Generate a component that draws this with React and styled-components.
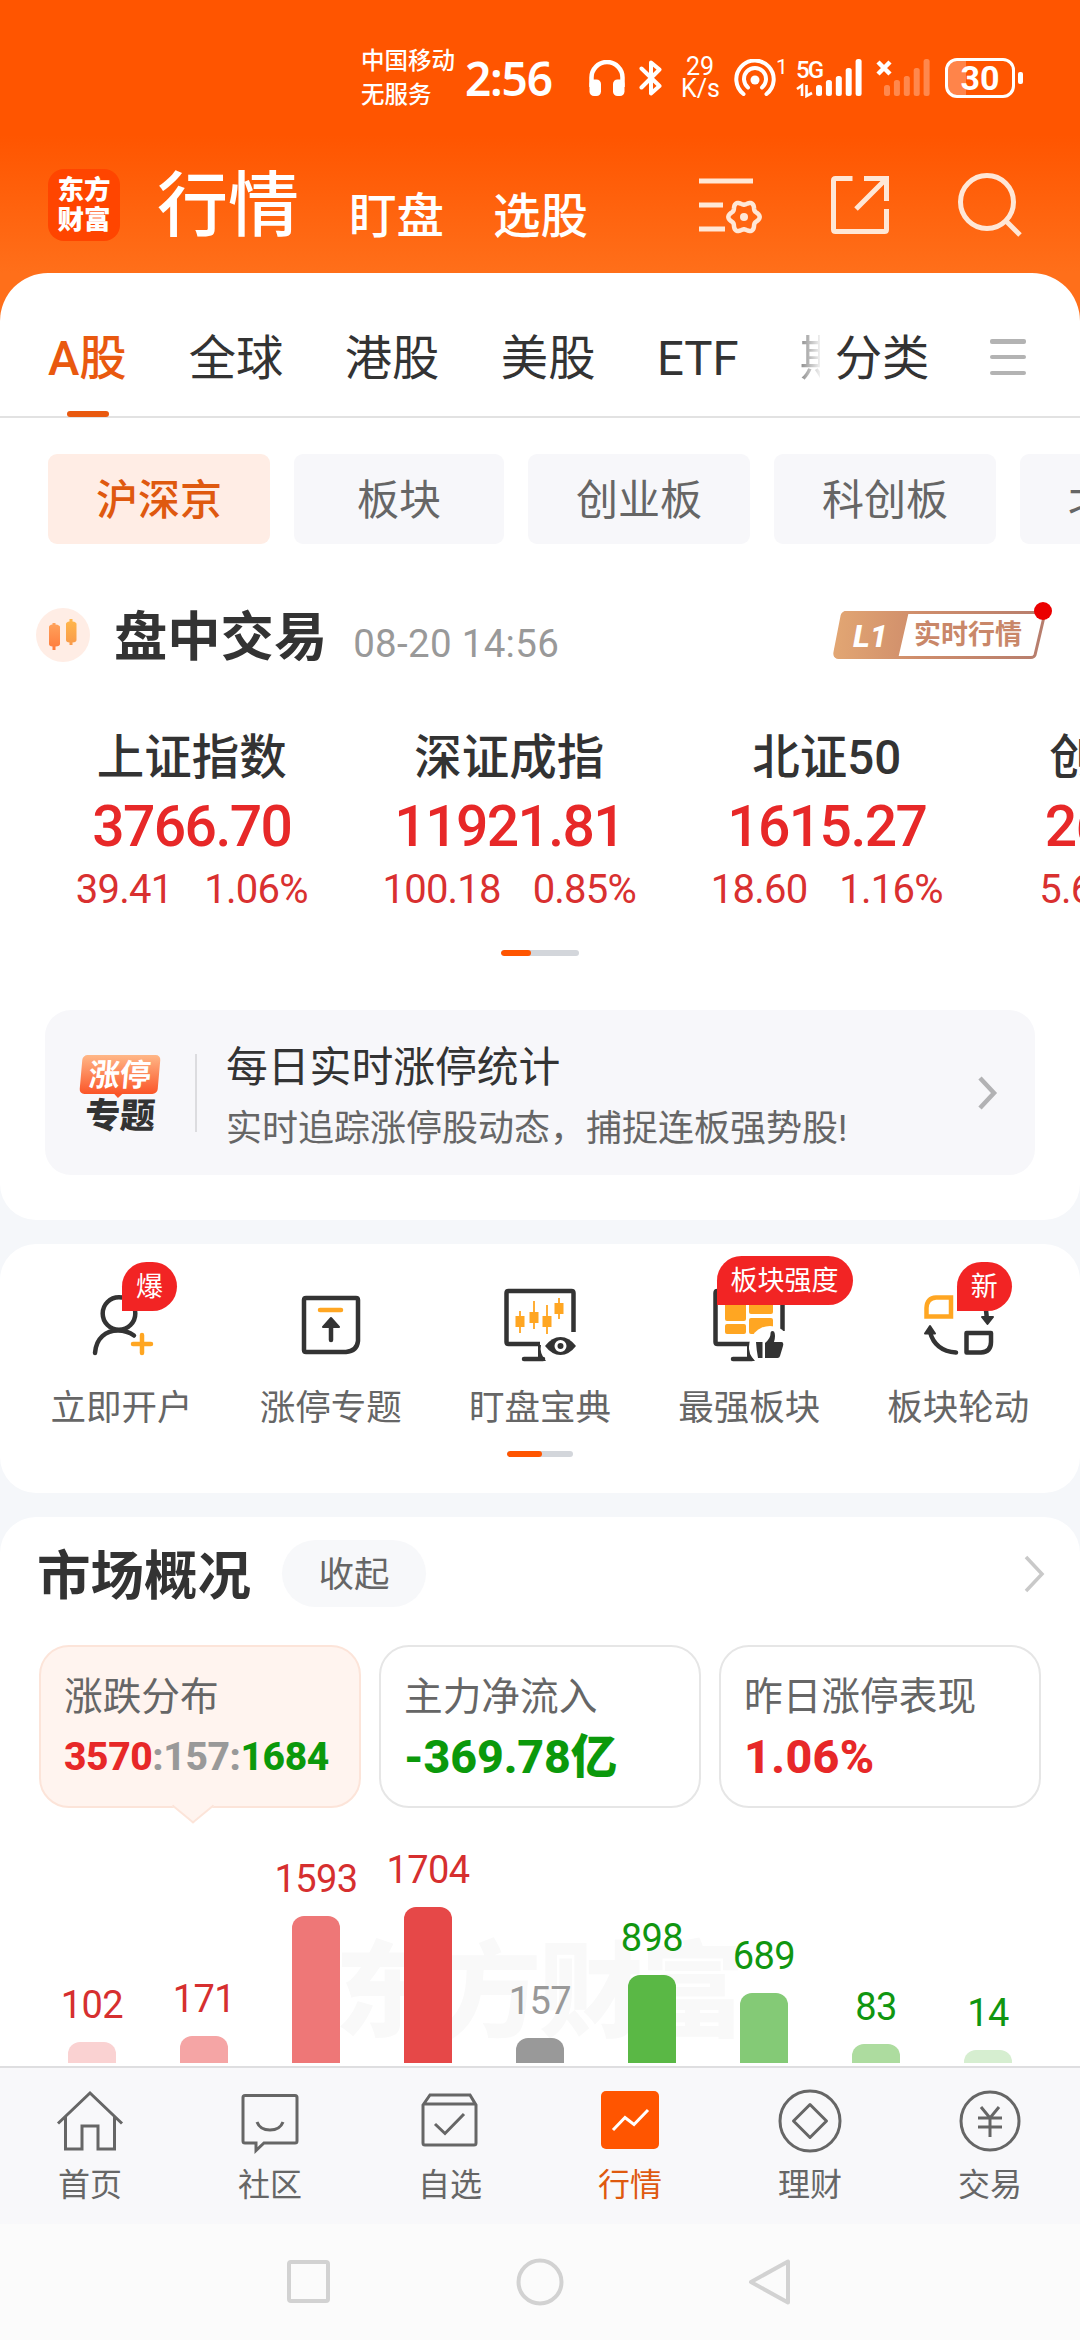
import React from "react";
import styled, { createGlobalStyle, css } from "styled-components";

const INK = "#333333";
const GREY = "#666666";
const MUTED = "#999999";
const RED = "#e72828";
const GREEN = "#0b990b";
const BRAND = "#ff5500";
const ACCENT = "#e9590f";
const AMBER = "#ffa622";

const GlobalStyle = createGlobalStyle`
  * { box-sizing: border-box; }
  html, body { margin: 0; padding: 0; background: #f5f7fa; }
  body {
    font-family: Roboto, "Noto Sans CJK SC", sans-serif;
    color: ${INK};
    white-space: nowrap;
  }
  svg { display: block; flex: none; }
`;

const Screen = styled.div`
  width: 1080px;
  height: 2340px;
  display: flex;
  flex-direction: column;
  overflow: hidden;
  background: #f5f7fa;
`;

/* ---------- top area ---------- */
const Top = styled.header`
  height: 330px;
  margin-bottom: -57px;
  flex: none;
  background: linear-gradient(#ff5500 0, #ff5500 135px, #ff6f1a 273px);
`;

const StatusBar = styled.div`
  height: 156px;
  padding: 0 58px 0 361px;
  display: flex;
  align-items: center;
  color: #fff;
`;

const Carrier = styled.div`
  flex: none;
  font-size: 23.5px;
  line-height: 34px;
  font-weight: 500;
  margin-right: 10px;
`;

const Clock = styled.div`
  flex: none;
  width: 93px;
  font-family: "Noto Sans", sans-serif;
  font-size: 46px;
  line-height: 56px;
  font-weight: 600;
  letter-spacing: -1.2px;
`;

const StatusIcon = styled.svg`
  margin-left: ${(p) => p.$gap || 0}px;
`;

const NetSpeed = styled.div`
  flex: none;
  width: 38px;
  margin-left: 18px;
  font-size: 25px;
  line-height: 22px;
  text-align: center;
`;

const Superscript = styled.div`
  flex: none;
  align-self: flex-start;
  margin-top: 55px;
  font-size: 21px;
  line-height: 24px;
  width: 18px;
  text-align: left;
`;

const Signal = styled.div`
  flex: none;
  position: relative;
  width: 67px;
  height: 40px;
  margin-left: ${(p) => p.$gap}px;
`;

const SignalTag = styled.span`
  position: absolute;
  left: 0;
  top: 0;
  font-size: 24px;
  line-height: 24px;
  font-weight: 500;
  letter-spacing: -2px;
`;

const Battery = styled.div`
  width: 70px;
  height: 40px;
  margin-left: 14px;
  border: 3.5px solid #fff;
  border-radius: 12px;
  background: linear-gradient(90deg, #ff844a 0 28%, transparent 28%);
  font-size: 34px;
  line-height: 34px;
  font-weight: 700;
  text-align: center;
  flex: none;
`;

const BatteryNub = styled.div`
  width: 5px;
  height: 12px;
  margin-left: 3px;
  border-radius: 2px;
  background: #fff;
  flex: none;
`;

const TitleBar = styled.div`
  display: flex;
  align-items: center;
  height: 98px;
  padding: 0 58px 0 48px;
  color: #fff;
`;

const AppLogo = styled.div`
  width: 72px;
  height: 72px;
  border-radius: 16px;
  background: #ff4500;
  display: flex;
  flex-direction: column;
  justify-content: center;
  text-align: center;
  font-size: 26.5px;
  line-height: 30px;
  font-weight: 900;
`;

const PageTitle = styled.h1`
  margin: 1px 0 0 37px;
  font-size: 71px;
  line-height: 84px;
  font-weight: 500;
  width: 142px;
`;

const PageLink = styled.span`
  margin: 24px 0 0 ${(p) => p.$gap}px;
  font-size: 47.5px;
  line-height: 60px;
  font-weight: 500;
`;

const HeaderIcons = styled.div`
  display: flex;
  align-items: center;
  gap: 63.5px;
  margin-left: auto;
`;

/* ---------- market sheet ---------- */
const Sheet = styled.section`
  height: 947px;
  flex: none;
  border-radius: 48px 48px 36px 36px;
  background: #fff;
`;

const MarketTabs = styled.nav`
  height: 145px;
  padding: 0 54px 0 48px;
  display: flex;
  align-items: center;
  border-bottom: 2px solid #e2e2e2;
`;

const MarketTab = styled.div`
  position: relative;
  height: 145px;
  padding-top: 54px;
  margin-right: ${(p) => p.$gap}px;
  font-size: 47.3px;
  line-height: 66px;
  font-weight: 400;
  color: ${(p) => (p.$active ? ACCENT : INK)};
  ${(p) =>
    p.$active &&
    css`
      font-weight: 500;
      &::after {
        content: "";
        position: absolute;
        left: 19px;
        bottom: 0;
        width: 42px;
        height: 6px;
        border-radius: 3px;
        background: ${ACCENT};
      }
    `}
`;

const FadedTab = styled(MarketTab)`
  width: 20px;
  overflow: hidden;
  color: transparent;
  background: linear-gradient(90deg, #8a8a8a, #f0f0f0);
  background-clip: text;
  -webkit-background-clip: text;
`;

const MenuBars = styled.div`
  display: flex;
  flex-direction: column;
  justify-content: space-between;
  width: 36px;
  height: 36px;
  margin: 25px 0 0 auto;
  i {
    height: 4.5px;
    border-radius: 2px;
    background: #b3b3b3;
  }
`;

const Chips = styled.div`
  display: flex;
  gap: 24px;
  margin-top: 36px;
  padding-left: 48px;
  overflow: hidden;
`;

const Chip = styled.div`
  flex: none;
  min-width: 210px;
  height: 90px;
  padding: 0 48px;
  border-radius: 9px;
  background: ${(p) => (p.$active ? "#ffede5" : "#f7f7fa")};
  color: ${(p) => (p.$active ? "#df590f" : GREY)};
  font-size: 42px;
  line-height: 93px;
  font-weight: ${(p) => (p.$active ? 500 : 400)};
  text-align: center;
`;

const SessionRow = styled.div`
  display: flex;
  align-items: center;
  height: 70px;
  margin-top: 56px;
  padding: 0 33px 0 36px;
`;

const SessionTitle = styled.h2`
  margin: 5px 0 0 24px;
  font-size: 53.3px;
  line-height: 70px;
  font-weight: 700;
`;

const SessionTime = styled.span`
  margin: 17px 0 0 26px;
  font-size: 38.5px;
  line-height: 50px;
  letter-spacing: 0.3px;
  color: ${MUTED};
`;

const Quote = styled.div`
  position: relative;
  width: 216px;
  height: 58px;
  margin: -4px 0 0 auto;
`;

const QuoteTag = styled.span`
  position: absolute;
  left: 22px;
  top: 16px;
  color: #fff;
  font-size: 32px;
  line-height: 32px;
  font-weight: 800;
  font-style: italic;
`;

const QuoteText = styled.span`
  position: absolute;
  left: 83px;
  top: 14px;
  color: #c98769;
  font-size: 27px;
  line-height: 34px;
  font-weight: 700;
`;

const IndexStrip = styled.div`
  display: flex;
  margin-top: 53px;
  padding-left: 33px;
  overflow: hidden;
`;

const IndexCell = styled.div`
  flex: none;
  width: 317.5px;
  display: flex;
  flex-direction: column;
  align-items: center;
`;

const IndexName = styled.div`
  font-size: 47.5px;
  line-height: 70px;
  font-weight: 500;
`;

const IndexValue = styled.div`
  margin-top: 1px;
  font-size: 57px;
  line-height: 66px;
  font-weight: 500;
  letter-spacing: -1.6px;
  color: ${RED};
`;

const IndexChange = styled.div`
  display: flex;
  gap: 32px;
  font-size: 40px;
  line-height: 60px;
  letter-spacing: -0.8px;
  color: #d93030;
`;

const Pager = styled.div`
  width: ${(p) => p.$width}px;
  height: 6px;
  margin: ${(p) => p.$top}px auto 0;
  border-radius: 3px;
  background: #d3d6db;
  overflow: hidden;
  &::before {
    content: "";
    display: block;
    width: ${(p) => p.$filled}px;
    height: 6px;
    border-radius: 3px;
    background: ${BRAND};
  }
`;

const Promo = styled.div`
  display: flex;
  align-items: center;
  height: 165px;
  margin: 54px 45px 0;
  padding: 0 37px 0 34px;
  border-radius: 26px;
  background: #f7f7fa;
`;

const PromoMark = styled.div`
  width: 82px;
  padding-top: 5px;
  display: flex;
  flex-direction: column;
  align-items: center;
`;

const PromoBadge = styled.div`
  position: relative;
  width: 78px;
  height: 39px;
  border-radius: 5px;
  transform: skewX(-5deg);
  background: linear-gradient(#ffb787, #fb5528);
  color: #fff;
  font-size: 31px;
  line-height: 41px;
  font-weight: 700;
  text-align: center;
  &::after {
    content: "";
    position: absolute;
    left: 34px;
    top: 38px;
    border: 5px solid transparent;
    border-top-color: #fb5528;
  }
`;

const PromoWord = styled.div`
  margin-top: 4px;
  font-size: 35px;
  line-height: 38px;
  font-weight: 900;
  transform: skewX(-3deg);
`;

const PromoBody = styled.div`
  margin-left: 34px;
  padding: 11px 0 0 29px;
  border-left: 2px solid #dcdcdf;
  height: 78px;
  display: flex;
  flex-direction: column;
  justify-content: center;
  gap: 7px;
`;

const PromoTitle = styled.div`
  font-size: 41.8px;
  line-height: 54px;
`;

const PromoText = styled.div`
  font-size: 36px;
  line-height: 54px;
  color: ${GREY};
`;

const Chevron = styled.svg`
  margin-left: auto;
`;

/* ---------- shortcuts ---------- */
const Shortcuts = styled.section`
  height: 249px;
  margin-top: 24px;
  flex: none;
  border-radius: 36px;
  background: #fff;
`;

const ShortcutRow = styled.div`
  display: grid;
  grid-template-columns: repeat(5, 209.2px);
  justify-content: center;
  padding-top: 36px;
`;

const Shortcut = styled.div`
  position: relative;
  display: flex;
  flex-direction: column;
  align-items: center;
`;

const ShortcutLabel = styled.div`
  margin-top: 11px;
  font-size: 35.5px;
  line-height: 54px;
  color: ${GREY};
`;

const Badge = styled.div`
  position: absolute;
  left: ${(p) => p.$left}px;
  top: ${(p) => p.$top}px;
  height: 49px;
  padding: 0 14px;
  border-radius: 25px 25px 25px 0;
  background: #f22424;
  color: #fff;
  font-size: 27px;
  line-height: 50px;
`;

/* ---------- market overview ---------- */
const Overview = styled.section`
  flex: 1;
  min-height: 0;
  margin-top: 24px;
  padding: 0 39px;
  border-radius: 36px 36px 0 0;
  background: #fff;
  display: flex;
  flex-direction: column;
`;

const OverviewHead = styled.div`
  display: flex;
  align-items: center;
  height: 67px;
  margin: 23px -4px 0 -2px;
`;

const OverviewTitle = styled.h2`
  margin: 6px 0 0;
  width: 245px;
  font-size: 53.5px;
  line-height: 67px;
  font-weight: 700;
`;

const Collapse = styled.button`
  width: 144px;
  height: 67px;
  padding: 0;
  border: 0;
  border-radius: 34px;
  background: #f7f8fa;
  color: ${GREY};
  font: inherit;
  font-size: 35.5px;
  line-height: 70px;
`;

const Cards = styled.div`
  display: grid;
  grid-template-columns: repeat(3, 1fr);
  gap: 18px;
  margin-top: 38px;
`;

const Card = styled.div`
  position: relative;
  height: 163px;
  padding: 24px 0 0 23px;
  border: 2px solid ${(p) => (p.$active ? "#fce4d9" : "#e6e6e6")};
  border-radius: 30px;
  background: ${(p) => (p.$active ? "#fff4ef" : "#fff")};
  ${(p) =>
    p.$active &&
    css`
      &::after {
        content: "";
        position: absolute;
        left: 137px;
        bottom: -15px;
        width: 28px;
        height: 28px;
        border: solid #fce4d9;
        border-width: 0 2px 2px 0;
        background: #fff4ef;
        transform: scaleY(0.82) rotate(45deg);
      }
    `}
`;

const CardLabel = styled.div`
  font-size: 38.7px;
  line-height: 52px;
  color: ${GREY};
`;

const CardValue = styled.div`
  margin-top: 4px;
  font-size: ${(p) => p.$size}px;
  line-height: 60px;
  font-weight: 800;
  letter-spacing: ${(p) => p.$track}px;
  color: ${(p) => p.$color};
`;

const Tone = styled.span`
  color: ${(p) => p.$color};
`;

const Chart = styled.div`
  position: relative;
  flex: 1;
  display: grid;
  grid-template-columns: repeat(9, 112px);
  justify-content: center;
  align-items: end;
  padding-bottom: 3px;
`;

const Watermark = styled.div`
  position: absolute;
  left: 296px;
  bottom: 8px;
  font-size: 104px;
  line-height: 128px;
  font-weight: 900;
  letter-spacing: -2px;
  color: #f9f9f9;
`;

const Column = styled.div`
  position: relative;
  display: flex;
  flex-direction: column;
  align-items: center;
`;

const ColumnLabel = styled.div`
  font-size: 38px;
  line-height: 40px;
  margin-bottom: 17px;
  letter-spacing: -0.6px;
  color: ${(p) => p.$color};
`;

const Bar = styled.div`
  width: 48px;
  border-radius: 12px 12px 0 0;
  background: ${(p) => p.$fill};
`;

/* ---------- bottom ---------- */
const TabBar = styled.nav`
  height: 158px;
  flex: none;
  display: grid;
  grid-template-columns: repeat(6, 180px);
  border-top: 2px solid #dedee0;
  background: #f8f8fa;
`;

const TabItem = styled.div`
  display: flex;
  flex-direction: column;
  align-items: center;
  padding-top: 18px;
  font-size: 32px;
  line-height: 48px;
  color: ${(p) => (p.$active ? "#df590f" : GREY)};
`;

const TabIcon = styled.svg`
  margin-bottom: 5px;
`;

const SystemBar = styled.div`
  height: 116px;
  flex: none;
  display: flex;
  align-items: center;
  justify-content: center;
  gap: 181px;
  background: #fbfbfb;
`;

/* ---------- drawings ---------- */
const SignalBars = ({ opacity = 1 }) => (
  <svg width="67" height="40" viewBox="0 0 67 40" fill="#fff" opacity={opacity}>
    {[11, 16, 20, 28, 37].map((h, i) => (
      <rect key={h} x={20 + i * 9.9} y={38 - h} width="6" height={h} rx="2.5" />
    ))}
  </svg>
);

const Headphones = () => (
  <StatusIcon $gap={31} width="36" height="36" viewBox="0 0 36 36" fill="none" stroke="#fff">
    <path d="M2.500 27V17.500A15.500 15.500 0 0 1 33.500 17.500V27" strokeWidth="4.500" />
    <rect x="0.500" y="19.500" width="11.500" height="16.500" rx="4.500" fill="#fff" stroke="none" />
    <rect x="24" y="19.500" width="11.500" height="16.500" rx="4.500" fill="#fff" stroke="none" />
  </StatusIcon>
);

const Bluetooth = () => (
  <StatusIcon $gap={14} width="24" height="36" viewBox="0 0 24 36" fill="none" stroke="#fff" strokeWidth="4" strokeLinecap="round" strokeLinejoin="round">
    <path d="M2.500 8.500 20.500 26 12 33.500V2.500L20.500 9.500 2.500 27.500" />
  </StatusIcon>
);

const Hotspot = () => (
  <StatusIcon $gap={15} width="42" height="38" viewBox="0 0 42 38" fill="none" stroke="#fff" strokeWidth="4" strokeLinecap="round">
    <path d="M9.500 35A18.700 18.700 0 1 1 32.500 35" />
    <path d="M14 28.500A11 11 0 1 1 28 28.500" />
    <circle cx="21" cy="21" r="4.500" fill="#fff" stroke="none" />
  </StatusIcon>
);

const headerStroke = { fill: "none", stroke: "#ffe7d6", strokeWidth: 5 };

const gearPath = Array.from({ length: 73 }, (_, i) => {
  const a = (i * 5 * Math.PI) / 180;
  const r = 14 + 1.7 * Math.cos(6 * a);
  return `${i ? "L" : "M"}${(47 + r * Math.cos(a)).toFixed(2)} ${(45 + r * Math.sin(a)).toFixed(2)}`;
}).join("");

const ListSettings = () => (
  <svg width="66" height="66" viewBox="0 0 66 66" {...headerStroke}>
    <path d="M2 9H56M2 33H26M2 57H28" />
    <path d={gearPath + "Z"} strokeLinejoin="round" strokeWidth="4.500" />
    <circle cx="47" cy="45" r="4" fill="#ffe7d6" stroke="none" />
  </svg>
);

const Export = () => (
  <svg width="66" height="66" viewBox="0 0 66 66" {...headerStroke}>
    <path d="M25.500 6.500H8.500Q6.500 6.500 6.500 8.500V57.500Q6.500 59.500 8.500 59.500H57.500Q59.500 59.500 59.500 57.500V37" />
    <path d="M37 6.500H59.500V29M59 7 29 37" />
  </svg>
);

const Search = () => (
  <svg width="66" height="66" viewBox="0 0 66 66" {...headerStroke}>
    <circle cx="31" cy="30" r="26.500" />
    <path d="M50 49 64 63" />
  </svg>
);

const SessionIcon = () => (
  <svg width="54" height="54" viewBox="0 0 54 54">
    <defs>
      <linearGradient id="warmA" x2="0" y2="1"><stop stopColor="#ffa35c" /><stop offset="1" stopColor="#ff7a3c" /></linearGradient>
      <linearGradient id="warmB" x2="0" y2="1"><stop stopColor="#ffb84d" /><stop offset="1" stopColor="#f99a4a" /></linearGradient>
    </defs>
    <circle cx="27" cy="27" r="27" fill="#ffede5" />
    <path d="M13 19q0-2 3.500-2.500V15h3v1.500Q24 17 24 19v17q0 2-4.500 2.500V42h-3v-3.500Q13 38 13 36V19z" fill="url(#warmA)" />
    <path d="M30 16q0-2 3.500-2.500V11h3v2.500q4 .5 4 2.500v16q0 2-4 2.500V37h-3v-2.500q-3.500-.5-3.500-2.500z" fill="url(#warmB)" />
  </svg>
);

const QuoteFrame = () => (
  <svg width="222" height="64" viewBox="829 604 222 64" overflow="visible">
    <defs>
      <linearGradient id="bronze" gradientUnits="userSpaceOnUse" x1="832" y1="635" x2="1043" y2="650">
        <stop stopColor="#e2a673" />
        <stop offset=".4" stopColor="#cf8d6b" />
        <stop offset="1" stopColor="#b67d6d" />
      </linearGradient>
    </defs>
    <path d="M844 612.500H1043L1033 655Q1032 657.500 1029 657.500H837Q832 657.500 833 652L840 616Q841 612.500 844 612.500z" fill="#fff" stroke="url(#bronze)" strokeWidth="3" />
    <path d="M844 611H907L896 659H837Q831 658 832 652L840 616Q841 611 844 611z" fill="url(#bronze)" />
    <circle cx="1041" cy="611" r="9" fill="#eb0000" />
  </svg>
);

const dark = { fill: "none", stroke: INK, strokeWidth: 4.500 };

const shortcutArt = {
  account: (
    <svg width="90" height="90" viewBox="76 1280 90 90" {...dark} strokeLinecap="round">
      <circle cx="118" cy="1313.500" r="16.300" />
      <path d="M94 1353C95 1338 105 1330.500 117 1330.500Q126 1330.500 133 1335.500" />
      <path d="M132 1344H150M141 1335V1353" stroke={AMBER} />
    </svg>
  ),
  limitUp: (
    <svg width="90" height="90" viewBox="286 1280 90 90" {...dark}>
      <path d="M307 1298H356Q358 1298 358 1300V1341Q357 1351 346 1352H306Q304 1352 304 1350V1300Q304 1298 306 1298z" />
      <path d="M320 1310H341" stroke={AMBER} strokeLinecap="round" />
      <path d="M331 1325V1340" strokeLinecap="round" />
      <path d="M331 1318 339 1327H323z" fill={INK} strokeWidth="2" strokeLinejoin="round" />
    </svg>
  ),
  watch: (
    <svg width="90" height="90" viewBox="495 1280 90 90" {...dark}>
      <path d="M573.500 1332V1293Q573.500 1291 571.500 1291H508.500Q506.500 1291 506.500 1293V1342Q506.500 1344 508.500 1344H540" />
      <path d="M524 1359H543" strokeLinecap="round" />
      <path d="M538 1345H541Q539 1353 546 1361H538z" fill={INK} stroke="none" />
      <g stroke={AMBER} strokeWidth="1.800">
        <path d="M520 1311V1333M534 1301V1329M547 1305V1334M559 1298V1319" />
        <path d="M520 1316V1327M534 1312V1323M547 1316V1327M559 1303V1314" strokeWidth="9" />
      </g>
      <path d="M545 1346Q552 1337 560.500 1337T576 1346Q569 1355 560.500 1355T545 1346z" fill={INK} stroke="none" />
      <circle cx="560.500" cy="1346" r="4.500" fill={INK} stroke="#fff" strokeWidth="3" />
    </svg>
  ),
  strongest: (
    <svg width="90" height="90" viewBox="704 1280 90 90" {...dark}>
      <path d="M782.500 1331V1293Q782.500 1291 780.500 1291H717.500Q715.500 1291 715.500 1293V1342Q715.500 1344 717.500 1344H750" />
      <path d="M733 1359H752" strokeLinecap="round" />
      <g fill={AMBER} stroke="none">
        <rect x="725" y="1296" width="21" height="25" rx="2" />
        <rect x="725" y="1324" width="21" height="10" rx="2" />
        <rect x="749" y="1296" width="24" height="18" rx="2" />
        <rect x="749" y="1318" width="24" height="16" rx="2" />
      </g>
      <circle cx="770" cy="1347" r="21" fill="#fff" stroke="none" />
      <path d="M747 1345H749Q748 1354 755 1361H747z" fill={INK} stroke="none" />
      <path d="M756 1342H762.500V1358H758Q756.500 1350 756 1342zM765 1343Q771 1338 770.500 1333 771 1330 774 1331.500 776 1335 774 1342H781.500Q784 1342 783 1346L780 1356Q779.500 1358 777.500 1358H765z" fill={INK} stroke="none" />
    </svg>
  ),
  rotation: (
    <svg width="90" height="90" viewBox="913 1280 90 90" {...dark}>
      <path d="M936 1297.500H951V1316.500H926.500V1308Q927 1298 936 1297.500z" stroke={AMBER} />
      <path d="M966.500 1333H991V1342Q991 1352 981 1352.500H966.500z" strokeLinejoin="round" />
      <path d="M985 1300 987 1320" />
      <path d="M982 1317H993L987.500 1324z" fill={INK} strokeWidth="2" strokeLinejoin="round" />
      <path d="M930 1332Q935 1351 956 1352.500" strokeLinecap="round" />
      <path d="M930 1326 935 1333.500H925z" fill={INK} strokeWidth="2" strokeLinejoin="round" />
    </svg>
  ),
};

const tabArt = {
  home: <path d="M58 2123.500 90 2093 122 2123.500M65.500 2117V2149H82V2126H98V2149H114.500V2117" />,
  community: (
    <>
      <path d="M245 2095.500H295Q297 2095.500 297 2097.500V2141Q297 2143 295 2143H264L256 2150.500V2143H245Q243 2143 243 2141V2097.500Q243 2095.500 245 2095.500z" />
      <path d="M257 2122Q260 2130 270 2130T283 2122" />
    </>
  ),
  watchlist: (
    <>
      <path d="M423 2105 430 2095H470L476 2105V2143Q476 2145 474 2145H425Q423 2145 423 2143zM423 2104H476" />
      <path d="M435 2124 445 2133.500 464 2114" />
    </>
  ),
  market: (
    <>
      <rect x="601" y="2091" width="58" height="58" rx="5" fill={BRAND} stroke="none" />
      <path d="M613 2130 625 2117.500 634 2124.500 648 2110" stroke="#fff" />
    </>
  ),
  wealth: (
    <>
      <circle cx="810" cy="2121" r="30" />
      <path d="M793.500 2121 810 2104.500 826.500 2121 810 2137.500z" strokeLinejoin="round" />
    </>
  ),
  trade: (
    <>
      <circle cx="990" cy="2121" r="29" />
      <path d="M981 2107 990 2118 999 2107M990 2118V2137M978 2118H1002M978 2127H1002" />
    </>
  ),
};

/* ---------- data ---------- */
const marketTabs = [
  ["A股", 62, true],
  ["全球", 61.5],
  ["港股", 61.5],
  ["美股", 61.5],
  ["ETF", 61],
];

const chips = ["沪深京", "板块", "创业板", "科创板", "北交所"];

const indices = [
  ["上证指数", "3766.70", "39.41", "1.06%"],
  ["深证成指", "11921.81", "100.18", "0.85%"],
  ["北证50", "1615.27", "18.60", "1.16%"],
  ["创业板指", "2607.65", "5.66", "0.22%"],
];

const shortcuts = [
  { label: "立即开户", art: "account", badge: "爆", left: 105, top: -18 },
  { label: "涨停专题", art: "limitUp" },
  { label: "盯盘宝典", art: "watch" },
  { label: "最强板块", art: "strongest", badge: "板块强度", left: 72, top: -24 },
  { label: "板块轮动", art: "rotation", badge: "新", left: 103, top: -18 },
];

const columns = [
  [102, 21, "#fad2d2", "#d62f2f"],
  [171, 27, "#f5a5a5", "#d62f2f"],
  [1593, 147, "#ee7777", "#d62f2f"],
  [1704, 156, "#e64848", "#d62f2f"],
  [157, 25, "#999999", "#999999"],
  [898, 88, "#5ab845", "#109610"],
  [689, 70, "#84ca76", "#109610"],
  [83, 19, "#addc9f", "#109610"],
  [14, 13, "#d6eed0", "#109610"],
];

const bottomTabs = [
  ["首页", "home"],
  ["社区", "community"],
  ["自选", "watchlist"],
  ["行情", "market"],
  ["理财", "wealth"],
  ["交易", "trade"],
];

export default function App() {
  return (
    <Screen>
      <GlobalStyle />
      <Top>
        <StatusBar>
          <Carrier>
            <div>中国移动</div>
            <div>无服务</div>
          </Carrier>
          <Clock>2:56</Clock>
          <Headphones />
          <Bluetooth />
          <NetSpeed>
            <div>29</div>
            <div>K/s</div>
          </NetSpeed>
          <Hotspot />
          <Superscript>1</Superscript>
          <Signal $gap={2}>
            <SignalBars />
            <SignalTag>5G</SignalTag>
            <SignalTag as="svg" width="18" height="40" viewBox="0 0 18 40" fill="none" stroke="#fff" strokeWidth="2.600">
              <path d="M1 31 6 27.500V38M16 35 10.500 38V27" />
            </SignalTag>
          </Signal>
          <Signal $gap={1}>
            <SignalBars opacity={0.3} />
            <SignalTag as="svg" width="32" height="24" viewBox="0 0 32 24" stroke="#fff" strokeWidth="4.500">
              <path d="M14 4 26 16M26 4 14 16" />
            </SignalTag>
          </Signal>
          <Battery>30</Battery>
          <BatteryNub />
        </StatusBar>
        <TitleBar>
          <AppLogo>
            <div>东方</div>
            <div>财富</div>
          </AppLogo>
          <PageTitle>行情</PageTitle>
          <PageLink $gap={50}>盯盘</PageLink>
          <PageLink $gap={49}>选股</PageLink>
          <HeaderIcons>
            <ListSettings />
            <Export />
            <Search />
          </HeaderIcons>
        </TitleBar>
      </Top>

      <Sheet>
        <MarketTabs>
          {marketTabs.map(([name, gap, active]) => (
            <MarketTab key={name} $gap={gap} $active={active}>{name}</MarketTab>
          ))}
          <FadedTab $gap={15}>期货</FadedTab>
          <MarketTab $gap={0}>分类</MarketTab>
          <MenuBars><i /><i /><i /></MenuBars>
        </MarketTabs>

        <Chips>
          {chips.map((name, i) => (
            <Chip key={name} $active={i === 0}>{name}</Chip>
          ))}
        </Chips>

        <SessionRow>
          <SessionIcon />
          <SessionTitle>盘中交易</SessionTitle>
          <SessionTime>08-20 14:56</SessionTime>
          <Quote>
            <QuoteFrame />
            <QuoteTag>L1</QuoteTag>
            <QuoteText>实时行情</QuoteText>
          </Quote>
        </SessionRow>

        <IndexStrip>
          {indices.map(([name, value, diff, pct]) => (
            <IndexCell key={name}>
              <IndexName>{name}</IndexName>
              <IndexValue>{value}</IndexValue>
              <IndexChange>
                <span>{diff}</span>
                <span>{pct}</span>
              </IndexChange>
            </IndexCell>
          ))}
        </IndexStrip>
        <Pager $width={78} $filled={30} $top={30} />

        <Promo>
          <PromoMark>
            <PromoBadge>涨停</PromoBadge>
            <PromoWord>专题</PromoWord>
          </PromoMark>
          <PromoBody>
            <PromoTitle>每日实时涨停统计</PromoTitle>
            <PromoText>实时追踪涨停股动态，捕捉连板强势股!</PromoText>
          </PromoBody>
          <Chevron width="22" height="36" viewBox="0 0 22 36" fill="none" stroke="#b2b2b4" strokeWidth="4.500">
            <path d="M4 3 18 18 4 33" />
          </Chevron>
        </Promo>
      </Sheet>

      <Shortcuts>
        <ShortcutRow>
          {shortcuts.map((s) => (
            <Shortcut key={s.label}>
              {shortcutArt[s.art]}
              <ShortcutLabel>{s.label}</ShortcutLabel>
              {s.badge && <Badge $left={s.left} $top={s.top}>{s.badge}</Badge>}
            </Shortcut>
          ))}
        </ShortcutRow>
        <Pager $width={66} $filled={35} $top={16} />
      </Shortcuts>

      <Overview>
        <OverviewHead>
          <OverviewTitle>市场概况</OverviewTitle>
          <Collapse>收起</Collapse>
          <Chevron width="22" height="40" viewBox="0 0 22 40" fill="none" stroke="#c9c9c9" strokeWidth="3.500">
            <path d="M3 3 19 20 3 37" />
          </Chevron>
        </OverviewHead>

        <Cards>
          <Card $active>
            <CardLabel>涨跌分布</CardLabel>
            <CardValue $size={39} $track={-0.4}>
              <Tone $color={RED}>3570</Tone>
              <Tone $color={MUTED}>:157:</Tone>
              <Tone $color={GREEN}>1684</Tone>
            </CardValue>
          </Card>
          <Card>
            <CardLabel>主力净流入</CardLabel>
            <CardValue $size={46.5} $track={-0.1} $color={GREEN}>-369.78亿</CardValue>
          </Card>
          <Card>
            <CardLabel>昨日涨停表现</CardLabel>
            <CardValue $size={46.5} $track={0.4} $color={RED}>1.06%</CardValue>
          </Card>
        </Cards>

        <Chart>
          <Watermark>东方财富</Watermark>
          {columns.map(([count, height, fill, color]) => (
            <Column key={count}>
              <ColumnLabel $color={color}>{count}</ColumnLabel>
              <Bar $fill={fill} style={{ height }} />
            </Column>
          ))}
        </Chart>
      </Overview>

      <TabBar>
        {bottomTabs.map(([name, art], i) => (
          <TabItem key={name} $active={art === "market"}>
            <TabIcon width="70" height="70" viewBox={`${55 + i * 180} 2086 70 70`} fill="none" stroke={GREY} strokeWidth="3">
              {tabArt[art]}
            </TabIcon>
            {name}
          </TabItem>
        ))}
      </TabBar>

      <SystemBar>
        <svg width="50" height="50" viewBox="0 0 50 50" fill="none" stroke="#d2d2d2" strokeWidth="4"><rect x="5" y="5" width="39" height="39" rx="2" /></svg>
        <svg width="50" height="50" viewBox="0 0 50 50" fill="none" stroke="#d2d2d2" strokeWidth="4"><circle cx="25" cy="25" r="21.500" /></svg>
        <svg width="50" height="50" viewBox="0 0 50 50" fill="none" stroke="#d2d2d2" strokeWidth="4" strokeLinejoin="round"><path d="M42 4.500V45.500L5 25z" /></svg>
      </SystemBar>
    </Screen>
  );
}
